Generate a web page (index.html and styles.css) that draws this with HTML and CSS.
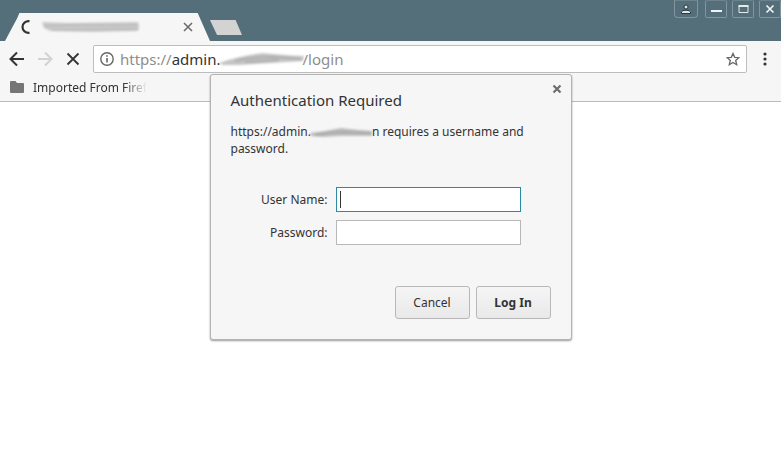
FILE: index.html
```html
<!DOCTYPE html>
<html lang="en">
<head>
    <meta charset="UTF-8">
    <meta name="viewport" content="width=device-width, initial-scale=1.0">
    <title>Authentication Required</title>
    <link rel="stylesheet" href="styles.css">
</head>
<body>
<header class="browser">
    <div class="titlebar">
        <div class="tab">
            <svg class="spinner" width="12" height="16" viewBox="0 0 12 16"><path d="M9.5 2.2C5.500 1.800 2.500 4.500 2.500 8s3 6.200 7 5.800" fill="none" stroke="#333" stroke-width="2.200"/></svg>
            <svg class="tab-smudge" width="102" height="14" viewBox="0 0 102 14">
                <defs><filter id="soft" x="-10%" y="-30%" width="120%" height="160%"><feGaussianBlur stdDeviation="0.8"/></filter></defs>
                <g filter="url(#soft)">
                    <path d="M2 2 28 3 98 2Q100 7 98 11L52 12 10 11 4 8Z" fill="#cacaca"/>
                    <path d="M4 6 32 5 97 5M12 10 97 9" fill="none" stroke="#b9b9b9" stroke-width="1.500"/>
                </g>
            </svg>
            <button class="icon-button tab-close" aria-label="Close tab">
                <svg width="10" height="10" viewBox="0 0 10 10"><path d="M1 1l8 8M9 1l-8 8" stroke="#6b6b6b" stroke-width="1.600"/></svg>
            </button>
        </div>
        <button class="new-tab" aria-label="New tab"></button>
        <div class="window-controls">
            <button class="window-button profile" aria-label="Profile">
                <svg width="10" height="10" viewBox="0 0 10 10"><circle cx="5" cy="3" r="2" fill="#dfe7ea" stroke="#27383f"/><path d="M.5 9.500V8Q1 6.200 5 6.200T9.500 8v1.500z" fill="#dfe7ea" stroke="#27383f"/></svg>
            </button>
            <button class="window-button" aria-label="Minimize">
                <svg width="11" height="10" viewBox="0 0 11 10"><path d="M0 7h11" stroke="#eef3f5" stroke-width="2"/></svg>
            </button>
            <button class="window-button" aria-label="Maximize">
                <svg width="11" height="10" viewBox="0 0 11 10"><path d="M1 2h9v6.500H1z" fill="none" stroke="#e4ebee"/><path d="M.5 2h10" stroke="#e4ebee" stroke-width="2"/></svg>
            </button>
            <button class="window-button" aria-label="Close">
                <svg width="10" height="10" viewBox="0 0 10 10"><path d="M1.500 1.500l7 7M8.500 1.500l-7 7" stroke="#eef3f5" stroke-width="1.700"/></svg>
            </button>
        </div>
    </div>

    <div class="toolbar">
        <button class="icon-button" aria-label="Back">
            <svg width="16" height="16" viewBox="0 0 16 16"><path d="M15 8H2M8 1.500L1.500 8 8 14.500" fill="none" stroke="#333" stroke-width="2"/></svg>
        </button>
        <button class="icon-button" aria-label="Forward" disabled>
            <svg width="16" height="16" viewBox="0 0 16 16"><path d="M1 8h13M8 1.500L14.500 8 8 14.500" fill="none" stroke="#d2d2d2" stroke-width="2"/></svg>
        </button>
        <button class="icon-button" aria-label="Stop loading">
            <svg width="16" height="16" viewBox="0 0 16 16"><path d="M2.500 2.500l11 11M13.500 2.500l-11 11" stroke="#333" stroke-width="1.800"/></svg>
        </button>
        <div class="omnibox">
            <svg width="14" height="14" viewBox="0 0 14 14"><circle cx="7" cy="7" r="6.200" fill="none" stroke="#666" stroke-width="1.400"/><path d="M7 6v4.500M7 3.300v1.500" stroke="#666" stroke-width="1.600"/></svg>
            <div class="url" role="textbox" aria-label="Address" contenteditable="true" spellcheck="false">https://<span class="host">admin.</span><svg class="url-smudge" width="82" height="16" viewBox="0 0 82 16">
                <g filter="url(#soft)">
                    <path d="M-2 12Q18 5 42 2 60 4 83 5L82 10 50 12 18 14 2 14Z" fill="#c5c5c5"/>
                    <path d="M14 10Q32 6 52 6L80 8M24 11 58 9" fill="none" stroke="#adadad" stroke-width="2"/>
                </g>
            </svg>/login</div>
            <button class="icon-button" aria-label="Bookmark this page">
                <svg width="14" height="14" viewBox="0 0 14 14"><path d="M7 1.400l1.700 3.900 4.200.4-3.200 2.800 1 4.200L7 10.500l-3.700 2.200 1-4.200L1.100 5.700l4.200-.4z" fill="none" stroke="#666" stroke-width="1.300"/></svg>
            </button>
        </div>
        <button class="icon-button menu" aria-label="Menu">
            <svg width="4" height="14" viewBox="0 0 4 14" fill="#333"><circle cx="2" cy="2" r="1.600"/><circle cx="2" cy="7" r="1.600"/><circle cx="2" cy="12" r="1.600"/></svg>
        </button>
    </div>

    <nav class="bookmarks">
        <a class="bookmark" href="#">
            <svg width="14" height="12" viewBox="0 0 14 12"><path d="M1 0h4.500L7 2h6q1 0 1 1v8q0 1-1 1H1q-1 0-1-1V1q0-1 1-1z" fill="#757575"/></svg>
            <span class="bookmark-title">Imported From Firefox</span>
        </a>
    </nav>
</header>

<form class="dialog" role="dialog" aria-labelledby="dialogTitle">
    <button class="icon-button dialog-close" type="button" aria-label="Close">
        <svg width="10" height="10" viewBox="0 0 10 10"><path d="M1.500 1.500l7 7M8.500 1.500l-7 7" stroke="#6e6e6e" stroke-width="2.200"/></svg>
    </button>
    <h1 id="dialogTitle">Authentication Required</h1>
    <p class="message">https://admin.<svg class="message-smudge" width="61" height="12" viewBox="0 0 61 12">
        <g filter="url(#soft)">
            <path d="M-1 6Q16 4 30 1 46 3 61 4V9L30 9 12 10 0 9Z" fill="#bdbdbd"/>
            <path d="M4 8Q20 5 34 5L60 6" fill="none" stroke="#a9a9a9" stroke-width="2"/>
        </g>
    </svg>n requires a username and password.</p>
    <div class="fields">
        <label for="username">User Name:</label>
        <input class="focused" type="text" id="username" autocomplete="username">
        <label for="password">Password:</label>
        <input type="password" id="password" autocomplete="current-password">
    </div>
    <div class="actions">
        <button class="button" type="button">Cancel</button>
        <button class="button primary" type="submit">Log In</button>
    </div>
</form>
</body>
</html>
```
FILE: styles.css
```css
* {
    box-sizing: border-box;
}

body {
    margin: 0;
    font-family: "Noto Sans", sans-serif;
    font-size: 12px;
    color: #333;
    background-color: white;
}

svg {
    display: block;
    flex-shrink: 0;
}

button {
    font-family: inherit;
    cursor: pointer;
}

.icon-button {
    display: flex;
    padding: 0;
    border: none;
    background: none;
}

.browser {
    background-color: #f6f6f6;
    border-bottom: 1px solid #bcbcbc;
}

.titlebar {
    display: flex;
    height: 41px;
    padding-left: 5px;
    background-color: #546e7a;
}

.tab {
    display: flex;
    align-items: center;
    width: 205px;
    height: 28px;
    margin-top: 13px;
    padding: 0 17px 0 15px;
    background-color: #f6f6f6;
    clip-path: polygon(0 100%, 6% 18%, 7% 0, 94% 0, 100% 100%);
}

.tab-smudge {
    margin-left: 8px;
}

.tab-close {
    margin-left: auto;
}

.new-tab {
    width: 32px;
    height: 15px;
    margin-top: 20px;
    padding: 0;
    border: none;
    background-color: #d3d3d3;
    clip-path: polygon(0 0, 80% 0, 100% 100%, 22% 100%);
}

.window-controls {
    display: flex;
    gap: 5px;
    margin-left: auto;
}

.window-button {
    display: flex;
    justify-content: center;
    align-items: center;
    width: 22px;
    height: 18px;
    padding: 0;
    border: 1px solid #82959e;
    border-top-color: #6c838d;
    border-radius: 2px;
    background: none;
}

.profile {
    width: 24px;
    margin-right: 2px;
    border-radius: 0 0 4px 4px;
}

.toolbar {
    display: flex;
    align-items: center;
    gap: 12px;
    padding: 4px 14px 0 9px;
}

.omnibox {
    display: flex;
    flex: 1;
    align-items: center;
    gap: 6px;
    height: 28px;
    padding: 0 6px;
    border: 1px solid #bdbdbd;
    border-radius: 2px;
    background-color: white;
}

.url {
    display: flex;
    flex: 1;
    align-items: center;
    font-size: 15px;
    line-height: 20px;
    color: #8e8e8e;
    outline: none;
}

.host {
    color: #333;
}

.url-smudge,
.message-smudge {
    overflow: visible;
}

.menu {
    margin-left: 4px;
}

.bookmarks {
    display: flex;
    height: 28px;
    padding: 0 10px;
}

.bookmark {
    display: flex;
    align-items: center;
    gap: 9px;
    color: #333;
    text-decoration: none;
}

.bookmark-title {
    width: 114px;
    overflow: hidden;
    white-space: nowrap;
    mask-image: linear-gradient(to right, black 80%, transparent);
}

.dialog {
    position: absolute;
    top: 74px;
    left: 50%;
    width: 362px;
    padding: 15px 20px 20px;
    border: 1px solid #b4b4b4;
    border-radius: 3px;
    background-color: #f6f6f6;
    box-shadow: 0 1px 2px rgba(0, 0, 0, 0.4);
    transform: translateX(-50%);
}

.dialog-close {
    position: absolute;
    top: 9px;
    right: 9px;
}

h1 {
    margin: 0 0 13px;
    font-size: 15px;
    font-weight: normal;
    line-height: 20px;
}

.message {
    margin: 0;
    line-height: 17px;
}

.message-smudge {
    display: inline-block;
    vertical-align: -3px;
}

.fields {
    display: grid;
    grid-template-columns: 97px 185px;
    gap: 8px;
    align-items: center;
    margin-top: 30px;
}

.fields label {
    text-align: right;
}

.fields input {
    width: 100%;
    height: 25px;
    padding: 0 4px;
    border: 1px solid #b8b8b8;
    border-radius: 0;
    background-color: white;
    font-family: inherit;
    font-size: 12px;
    outline: none;
}

.fields .focused {
    border-color: #2a8ba8;
    background-image: linear-gradient(#333, #333);
    background-position: 3px 3px;
    background-size: 1px 17px;
    background-repeat: no-repeat;
}

.fields .focused:focus {
    background-image: none;
}

.actions {
    display: flex;
    justify-content: flex-end;
    gap: 6px;
    margin-top: 41px;
}

.button {
    width: 75px;
    height: 33px;
    padding: 0;
    border: 1px solid #b8b8b8;
    border-radius: 3px;
    background: linear-gradient(#f5f5f5, #e9e9e9);
    font-size: 12px;
    color: #333;
}

.primary {
    font-weight: bold;
}
```
